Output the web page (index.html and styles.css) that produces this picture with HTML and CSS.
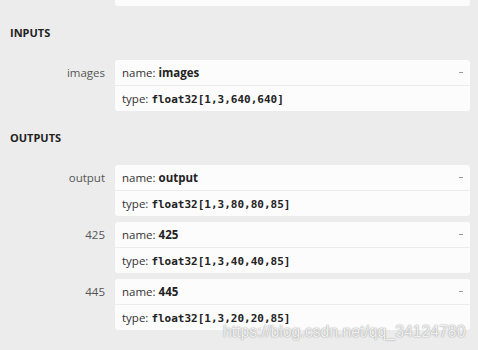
FILE: index.html
```html
<!DOCTYPE html>
<html lang="en">
<head>
    <meta charset="UTF-8">
    <meta name="viewport" content="width=device-width, initial-scale=1.0">
    <title>Model properties</title>
    <link rel="stylesheet" href="styles.css">
</head>
<body>
    <div class="sidebar">
        <div class="card card-top"></div>

        <div class="section-title">INPUTS</div>
        <div class="item">
            <div class="item-label">images</div>
            <div class="card">
                <div class="card-row">name: <b>images</b><span class="toggle"></span></div>
                <div class="card-row">type: <code>float32[1,3,640,640]</code></div>
            </div>
        </div>

        <div class="section-title">OUTPUTS</div>
        <div class="item">
            <div class="item-label">output</div>
            <div class="card">
                <div class="card-row">name: <b>output</b><span class="toggle"></span></div>
                <div class="card-row">type: <code>float32[1,3,80,80,85]</code></div>
            </div>
        </div>
        <div class="item">
            <div class="item-label">425</div>
            <div class="card">
                <div class="card-row">name: <b>425</b><span class="toggle"></span></div>
                <div class="card-row">type: <code>float32[1,3,40,40,85]</code></div>
            </div>
        </div>
        <div class="item">
            <div class="item-label">445</div>
            <div class="card">
                <div class="card-row">name: <b>445</b><span class="toggle"></span></div>
                <div class="card-row">type: <code>float32[1,3,20,20,85]</code></div>
            </div>
        </div>
    </div>

    <!-- watermark -->
    <div class="watermark">https://blog.csdn.net/qq_34124780</div>
</body>
</html>
```

FILE: styles.css
```css
body {
    margin: 0;
    background-color: #ececec;
    font-family: "Open Sans", "Noto Sans", sans-serif;
    font-size: 11.5px;
    color: #333;
}

.sidebar {
    padding: 0 8px 0 10px;
}

.card {
    flex: 1;
    background-color: #fcfcfc;
    border-radius: 3px;
}

.card-top {
    height: 6px;
    margin-left: 105px;
    border-radius: 0 0 3px 3px;
}

.section-title {
    font-weight: bold;
    font-size: 11px;
    color: #222;
    line-height: 20px;
    margin: 17px 0 17px 0;
}

.item {
    display: flex;
    gap: 10px;
    margin-bottom: 6px;
}

.item-label {
    width: 95px;
    text-align: right;
    line-height: 25px;
    color: #555;
}

.card-row {
    position: relative;
    height: 25px;
    line-height: 25px;
    padding-left: 7px;
}

.card-row:first-child {
    border-bottom: 1px solid #ececec;
}

.card-row b {
    color: #222;
}

.card-row code {
    font-family: "DejaVu Sans Mono", "Liberation Mono", monospace;
    font-size: 11px;
    font-weight: bold;
    color: #222;
}

/* little collapse dash */
.toggle {
    position: absolute;
    top: 12px;
    right: 7px;
    width: 4px;
    height: 1px;
    background-color: #999;
}

.watermark {
    position: absolute;
    left: 223px;
    top: 324px;
    line-height: 1;
    font-family: "Liberation Sans", Arial, sans-serif;
    font-size: 15.8px;
    color: rgba(255, 255, 255, 0.85);
    text-shadow: 0 0 1px #999, 0 0 2px #bbb;
}
```
